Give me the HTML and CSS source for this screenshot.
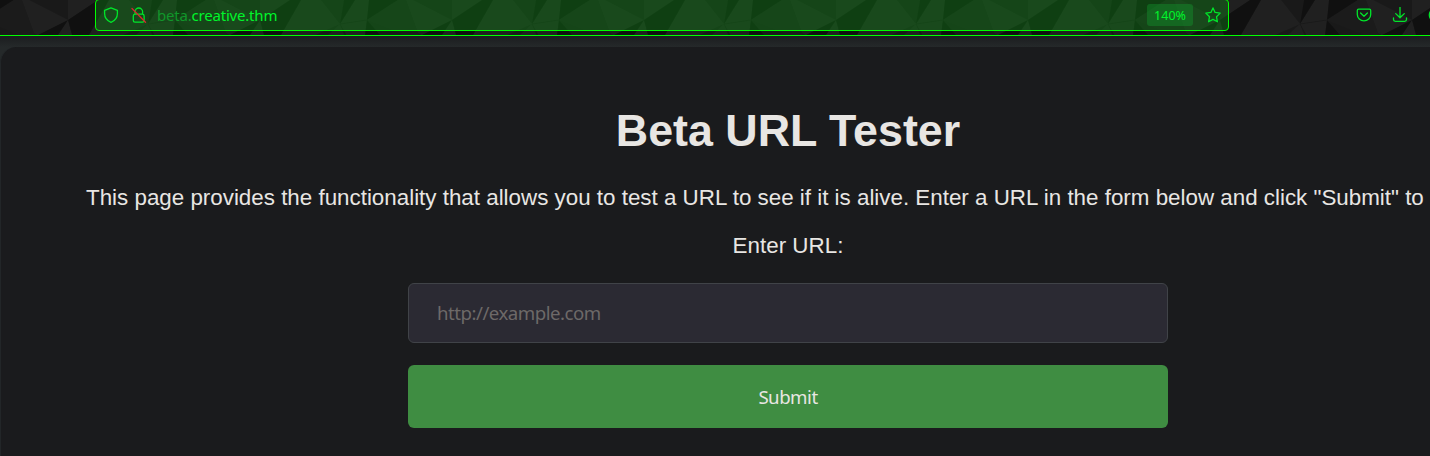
FILE: index.html
```html
<!DOCTYPE html>
<html lang="en">
<head>
<meta charset="utf-8">
<title>Beta URL Tester</title>
<link rel="stylesheet" href="styles.css">
</head>
<body>
<header class="toolbar">
  <svg class="pattern" width="1430" height="35" aria-hidden="true">
    <defs>
      <pattern id="facets" x="68" y="0" width="192" height="35" patternUnits="userSpaceOnUse">
        <rect width="192" height="35" fill="#191919"/>
        <path fill="#202020" d="M0 0H30L0 20ZM41 0H61L80 24L55 35H21ZM95 0H109L107 20L80 24ZM80 24L107 20L105 35H86ZM80 24L84 35H68ZM146 0H153L192 20L162 35L158 33ZM0 20L4 35H0ZM192 20V35H182Z"/>
        <path fill="#101010" d="M30 0H41L21 35H4L0 20ZM84 0H95L80 24ZM109 0H138L107 20ZM107 20L120 35H105ZM192 20L182 35H162Z"/>
        <path fill="#1b1b1b" d="M107 20L138 0H146L158 33V35H145Z"/>
        <path fill="none" stroke="#151515" stroke-width=".7" d="M80 24L107 20M80 24L86 35"/>
      </pattern>
    </defs>
    <rect width="1430" height="35" fill="url(#facets)"/>
  </svg>
  <div class="urlbar">
    <svg class="icon shield" viewBox="0 0 16 16"><path d="M8 .8L14.4 3.3V6.5C14.4 11 11.8 13.8 8 15.3C4.2 13.8 1.6 11 1.6 6.5V3.3Z"/></svg>
    <svg class="icon lock" viewBox="0 0 16 16"><path d="M4 7.2V4.8A3.8 3.8 0 0 1 11.6 4.8V7.2M4 7.2H11.3A1.8 1.8 0 0 1 13.1 9V13.5A1.7 1.7 0 0 1 11.4 15.2H4A1.7 1.7 0 0 1 2.3 13.5V9A1.8 1.8 0 0 1 4 7.2Z"/><path class="slash" d="M1 1.5L14.5 15.2"/></svg>
    <span class="address"><span class="sub">beta.</span>creative.thm</span>
    <span class="zoom">140%</span>
    <svg class="icon star" viewBox="0 0 16 16"><path d="M8 .9L10.1 5.4L15.2 6.1L11.5 9.7L12.4 14.8L8 12.4L3.6 14.8L4.5 9.7L.8 6.1L5.9 5.4Z"/></svg>
  </div>
  <div class="actions">
    <svg class="icon" viewBox="0 0 16 16"><path d="M2.7 2.2H13.3Q14.7 2.2 14.7 3.6V7.5A6.7 6.4 0 0 1 1.3 7.5V3.6Q1.3 2.2 2.7 2.2ZM4.6 6L8 9.2L11.4 6"/></svg>
    <svg class="icon" viewBox="0 0 16 16"><path d="M8 .3V10.7M3.7 6.6L8 10.8L12.3 6.6M1.5 11V12.6Q1.5 14.4 3.3 14.4H12.7Q14.5 14.4 14.5 12.6V11"/></svg>
    <svg class="icon" viewBox="0 0 16 16"><circle cx="8" cy="8" r="6.7"/></svg>
  </div>
</header>
<main class="page">
  <section class="card">
    <h1>Beta URL Tester</h1>
    <p class="intro">This page provides the functionality that allows you to test a URL to see if it is alive. Enter a URL in the form below and click "Submit" to</p>
    <form class="form">
      <label for="url">Enter URL:</label>
      <input id="url" type="text" placeholder="http://example.com">
      <button type="button">Submit</button>
    </form>
  </section>
</main>
</body>
</html>
```
FILE: styles.css
```css
* { box-sizing: border-box; }
body {
  margin: 0;
  height: 456px;
  overflow: hidden;
  background: #181a1b;
  color: #e8e6e3;
  font: 22.4px "Liberation Sans", Arial, sans-serif;
}
.toolbar {
  position: relative;
  display: flex;
  height: 36px;
  padding-left: 95px;
  border-bottom: 1px solid #0f0;
  overflow: hidden;
}
.pattern { position: absolute; left: 0; top: 0; }
.urlbar {
  position: relative;
  display: flex;
  align-items: center;
  flex: none;
  width: 1134px;
  height: 32px;
  margin-top: -1px;
  padding: 0 7px;
  border: 1px solid #0f0;
  border-radius: 4px;
  background: rgba(15, 135, 22, .4);
  font: 15px "Noto Sans", sans-serif;
  color: #00f52b;
}
.icon {
  flex: none;
  width: 16px;
  height: 16px;
  fill: none;
  stroke: #00e62a;
  stroke-width: 1.3;
  stroke-linejoin: round;
  stroke-linecap: round;
}
.lock { margin-left: 12px; }
.icon .slash { stroke: #d9252f; }
.address { margin-left: 10px; line-height: 20px; letter-spacing: -.2px; }
.sub { color: #10962a; }
.zoom {
  width: 46px;
  height: 22px;
  margin-left: auto;
  border-radius: 3px;
  background: rgba(20, 150, 45, .42);
  font-size: 12.5px;
  line-height: 23px;
  text-align: center;
}
.star { margin: 0 0 0 12px; }
.actions {
  position: relative;
  display: flex;
  gap: 20px;
  margin: 7px 0 0 127px;
}
.page {
  padding-top: 11px;
  overflow: hidden;
  background: linear-gradient(#1b1d1f, #25292a 11px);
}
.card {
  height: 420px;
  padding: 58px 0 0 85px;
  border-left: 1px solid #222628;
  border-radius: 16px 0 0 0;
  background: #1a1b1d;
}
h1 {
  width: 1404px;
  margin: 0;
  font-size: 44.8px;
  line-height: 51px;
  text-align: center;
}
.intro { margin: 29px 0 0; font-size: 22.37px; line-height: 26px; white-space: nowrap; }
.form {
  display: flex;
  flex-direction: column;
  align-items: center;
  width: 1404px;
  margin-top: 22px;
}
label { line-height: 26px; }
input, button {
  width: 760px;
  border-radius: 6px;
  font: 18.67px "Noto Sans", sans-serif;
  letter-spacing: -.5px;
}
input {
  height: 60px;
  margin-top: 24px;
  padding: 0 28px 2px;
  border: 1px solid #404348;
  background: #2b2a33;
  color: #e8e6e3;
}
input::placeholder { color: #6d6968; opacity: 1; }
button {
  height: 63px;
  margin-top: 22px;
  border: 0;
  background: #3f8d42;
  color: #e8e6e3;
}
```
